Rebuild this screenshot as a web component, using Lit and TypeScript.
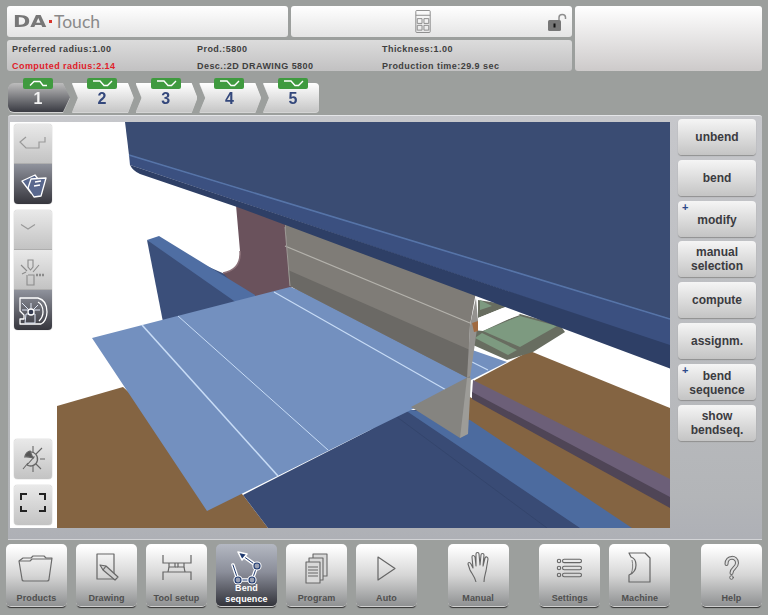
import { LitElement, html, css, svg } from "lit";
import { customElement } from "lit/decorators.js";

// bottom bar icons, drawn on the 61x39 upper part of each button
const folderIcon = svg`<g fill="none" stroke="#6b6b6b" stroke-width="1.2" stroke-linejoin="round">
  <path d="M13 17 L17 14 H25 L27 12 H38 L40 14 H46 L43 35 Q43 37 41 37 H18 Q16 37 16 35 Z" />
  <path d="M13 17 H24 L26 15 H46" />
</g>`;
const drawingIcon = svg`<g fill="none" stroke="#666" stroke-width="1.2" stroke-linejoin="round">
  <path d="M21 10 H38 V35 H21 Z" />
  <path d="M24 21 L30 22 L42 33 L39 36 L27 26 Z" fill="#cfcfcf" />
  <path d="M27 26 L30 22" />
</g>`;
const toolIcon = svg`<g fill="none" stroke="#666" stroke-width="1.2">
  <path d="M17 11 V19 H45 V11" />
  <path d="M23 19 V23 H29 V19 M32 19 V23 H38 V19" />
  <path d="M23 23 L22 28 M38 23 L39 28 M29 23 H32" />
  <path d="M17 36 V28 H45 V36" />
</g>`;
const bendNode = (x: number, y: number) => svg`
  <circle cx=${x} cy=${y} r="4.6" fill="#fff" />
  <circle cx=${x} cy=${y} r="3" fill="#9aa0b2" stroke="#1f3a70" stroke-width="1.2" />`;
const bendIcon = svg`<g fill="none" stroke-linejoin="round" stroke-linecap="round">
  <path d="M17 21 L22 36 H36 L41 22 L27 12" stroke="#fff" stroke-width="3.6" />
  <path d="M17 21 L22 36 H36 L41 22 L27 12" stroke="#1f3a70" stroke-width="1" />
  <path d="M22 8 L31 10 L26 16 Z" fill="#1f3a70" stroke="#fff" stroke-width="1.6" />
  ${bendNode(22, 36)}${bendNode(36, 36)}${bendNode(41, 22)}
</g>`;
const programIcon = svg`<g fill="#d8d8d8" stroke="#666" stroke-width="1.1" stroke-linejoin="round">
  <path d="M27 10 H41 V32 H27 Z" />
  <path d="M23 14 H37 V36 H23 Z" />
  <path d="M20 18 H34 V39 H20 Z" />
  <path d="M22 23 H32 M22 26 H32 M22 29 H32 M22 32 H32" fill="none" />
</g>`;
const autoIcon = svg`<path d="M22 13 L39 24.5 L22 36 Z" fill="none" stroke="#666" stroke-width="1.2" stroke-linejoin="round" />`;
const handIcon = svg`<path d="M28 38 C27 33 24 30 22 26 L20 20 C20 18 22 18 23 20 L25 24 L24 13 C24 11 26 11 27 13 L28 22 L28 10 C28 8 31 8 31 10 L32 21 L33 11 C33 9 36 9 36 11 L35 22 L37 14 C38 12 40 13 40 15 L38 27 C37 31 36 34 36 38" fill="none" stroke="#666" stroke-width="1.1" stroke-linejoin="round" />`;
const settingsIcon = svg`<g fill="none" stroke="#666" stroke-width="1.1">
  <circle cx="20" cy="17" r="1.7" /><circle cx="20" cy="24" r="1.7" /><circle cx="20" cy="31" r="1.7" />
  <rect x="23.5" y="15.2" width="19" height="3.4" rx="1.7" />
  <rect x="23.5" y="22.3" width="19" height="3.4" rx="1.7" />
  <rect x="23.5" y="29.3" width="19" height="3.4" rx="1.7" />
</g>`;
const machineIcon = svg`<g fill="none" stroke="#666" stroke-width="1.2" stroke-linejoin="round">
  <path d="M20 9 H36 L41 14 V38 H20 V31 C25 29 27 25 27 21 C27 17 25 14 22 13 Z" />
  <path d="M23 16 C24 20 24 26 22 30" stroke-width="0.8" />
</g>`;
const helpIcon = svg`<g fill="none" stroke-linecap="round">
  <path d="M25.5 20 C25.5 12 36 12 36 19 C36 24 30.5 24 30.5 29" stroke="#666" stroke-width="4" />
  <path d="M25.5 20 C25.5 12 36 12 36 19 C36 24 30.5 24 30.5 29" stroke="#ddd" stroke-width="2" />
  <circle cx="30.5" cy="33.5" r="1.8" fill="#ddd" stroke="#666" />
</g>`;

// left toolbar icons, 38x39
const contourIcon = svg`<path d="M12 13 L6 18 L12 24 H25 V18 H31 V13" fill="none" stroke="#999" stroke-width="1.2" />`;
const sheetsIcon = svg`<g fill="#59688e" stroke="#fff" stroke-width="1.3" stroke-linejoin="round">
  <path d="M8 17 L21 11 L24 15 L17 29 Z" />
  <path d="M17 15 L32 14 L27 32 L20 33 L14 24 Z" />
  <path d="M21 18 L27 17 M20 22 L26 21" fill="none" />
</g>`;
const chevronIcon = svg`<path d="M7 14.5 L14 19 L21 14.5" fill="none" stroke="#9a9a9a" stroke-width="1.2" />`;
const punchIcon = svg`<g fill="none" stroke="#8b8b8b" stroke-width="1.1">
  <path d="M14 10 H19 V17 L16.5 20 L14 17 Z" />
  <path d="M14 25 H20 V35 H13 V25 M7 15 L13 21 M25 15 L19 22 M8 24 L12 22" />
  <path d="M22 25 H31" stroke-width="2.5" stroke-dasharray="2 1" />
</g>`;
const dieIcon = svg`<g fill="none" stroke="#fff" stroke-width="1.3" stroke-linejoin="round">
  <path d="M6 8 H24 C32 10 33 17 33 22 C33 28 30 33 27 34 H6 V29 H10 V25 L6 21 V8 Z" />
  <path d="M24 12 C28 14 29 18 29 22 C29 26 27 29 25 31" />
  <path d="M17 13 V20 M8 13 L15 20 M24 15 L19 20 M12 24 H21 V33 H11 Z M8 20 H26" stroke="#dfe6f5" stroke-width="1" />
  <circle cx="17" cy="22" r="3" fill="#333a50" />
</g>`;
const focusIcon = svg`<g fill="none" stroke="#666" stroke-width="1.1">
  <path d="M16 13 A7 7 0 1 1 13 26" stroke-width="1.3" />
  <path d="M10 18 H20 L13 26 M19 7 V13 M28 9 L22 15 M31 20 H26 M27 30 L22 25 M19 33 V27 M9 30 L14 24" />
  <path d="M16 12 A7 7 0 0 0 11 17 L19 19 Z" fill="#555" />
</g>`;
const fitIcon = svg`<path d="M7 15 V9 H13 M25 9 H31 V15 M31 21 V26 H25 M13 26 H7 V21" fill="none" stroke="#222" stroke-width="2" />`;

const bottomGroups = [
  [
    { label: ["Products"], icon: folderIcon },
    { label: ["Drawing"], icon: drawingIcon },
    { label: ["Tool setup"], icon: toolIcon },
    { label: ["Bend", "sequence"], icon: bendIcon, active: true },
    { label: ["Program"], icon: programIcon },
    { label: ["Auto"], icon: autoIcon },
  ],
  [{ label: ["Manual"], icon: handIcon }],
  [
    { label: ["Settings"], icon: settingsIcon },
    { label: ["Machine"], icon: machineIcon },
  ],
  [{ label: ["Help"], icon: helpIcon }],
];

const sideButtons = [
  { lines: ["unbend"] },
  { lines: ["bend"] },
  { lines: ["modify"], plus: true },
  { lines: ["manual", "selection"] },
  { lines: ["compute"] },
  { lines: ["assignm."] },
  { lines: ["bend", "sequence"], plus: true },
  { lines: ["show", "bendseq."] },
];

const tabs = [
  { n: 1, up: true },
  { n: 2 },
  { n: 3 },
  { n: 4 },
  { n: 5 },
];

@customElement("app-root")
export class AppRoot extends LitElement {
  static styles = css`
    :host {
      display: block;
      width: 768px;
      height: 615px;
      overflow: hidden;
      background: #9c9f9d;
      font-family: "Liberation Sans", Arial, sans-serif;
    }

    .header {
      display: flex;
      gap: 3px;
      padding: 6px 6px 0 7px;
    }
    .header-left {
      width: 565px;
      display: flex;
      flex-direction: column;
      gap: 3.5px;
    }
    .header-top {
      display: flex;
      gap: 3px;
    }
    .cell {
      flex: none;
      width: 281px;
      height: 30.5px;
      box-sizing: border-box;
      display: flex;
      align-items: center;
      position: relative;
      border-radius: 3px;
      background: linear-gradient(#ffffff, #e4e4e4);
    }
    .logo {
      padding-left: 6px;
      color: #777777;
    }
    .logo-da {
      display: inline-block;
      font: 700 16px "DejaVu Sans", sans-serif;
      transform: scaleX(1.3);
      transform-origin: left;
      width: 35px;
    }
    .logo-dot {
      width: 3px;
      height: 3px;
      margin: 0 2px 0 1px;
      background: #d8352c;
    }
    .logo-touch {
      font: 400 17.5px Lato, sans-serif;
      color: #8a8a8a;
    }
    .center-icons {
      justify-content: center;
      padding-right: 18px;
    }
    .lock {
      position: absolute;
      right: 5px;
      top: 7px;
    }
    .info {
      height: 31px;
      border-radius: 3px;
      background: linear-gradient(#dcdcdc, #c2c1c2);
      display: grid;
      grid-template-columns: 185px 185px 1fr;
      grid-template-rows: 17px 17px;
      align-items: center;
      padding: 0 0 0 5px;
      font-size: 9px;
      font-weight: 700;
      letter-spacing: 0.45px;
      color: #3f3f3f;
    }
    .info .red {
      color: #e0202a;
    }
    .header-right {
      width: 187px;
      height: 65px;
      border-radius: 3px;
      background: linear-gradient(#ffffff, #cdcaca);
    }

    .tabs {
      display: flex;
      padding: 12px 0 0 8px;
      height: 29px;
      margin-bottom: 3px;
    }
    .tab {
      position: relative;
      width: 61.7px;
      margin-left: 2px;
      filter: drop-shadow(0 1px 0 #d4d4d4);
    }
    .tab:first-child {
      width: 62px;
      margin-left: 0;
    }
    .tab:last-child {
      width: 56px;
    }
    .shape {
      height: 29px;
      padding-left: 15px;
      background: linear-gradient(#ffffff, #c6c6c6);
      clip-path: polygon(0 0, 56px 0, 100% 50%, 56px 100%, 0 100%, 6px 50%);
    }
    .tab:first-child .shape {
      border-radius: 6px 0 0 6px;
      clip-path: polygon(0 0, 55px 0, 100% 50%, 55px 100%, 0 100%);
      background: linear-gradient(#bdbdbd, #393a42);
    }
    .tab:last-child .shape {
      border-radius: 0 4px 4px 0;
      clip-path: polygon(0 0, 100% 0, 100% 100%, 0 100%, 6px 50%);
    }
    .num {
      width: 30px;
      text-align: center;
      font-size: 16px;
      font-weight: 700;
      line-height: 32px;
      color: #34487c;
    }
    .tab:first-child .num {
      color: #f2f2f2;
    }
    .badge {
      position: absolute;
      top: -5px;
      left: 15px;
      width: 30px;
      height: 11px;
      border-radius: 2px;
      background: #3f9a3f;
    }
    .badge svg {
      display: block;
    }

    .panel {
      display: flex;
      margin: 0 6px 0 8px;
      height: 425px;
      padding: 6px 6px 12px 2px;
      box-sizing: border-box;
      border-radius: 3px 3px 0 0;
      border-top: 1px solid #e4e5e8;
      border-bottom: 1px solid #d2d3d6;
      background: linear-gradient(#c6c7cb, #b3b5b8 90%, #aeb0b6);
    }
    .canvas {
      display: flex;
      background: #ffffff;
      height: 406px;
      width: 660px;
    }
    .tools {
      width: 47px;
      flex: none;
      display: flex;
      flex-direction: column;
      gap: 6px;
      padding: 2px 0 3px 4px;
      box-sizing: border-box;
    }
    .tools .spacer {
      flex: 1;
    }
    .tool-group {
      width: 38px;
      border-radius: 4px;
      overflow: hidden;
      box-shadow: 0 0 1px #777;
    }
    .tool {
      height: 40px;
      background: linear-gradient(#e9e9e9, #c3c3c3);
      box-sizing: border-box;
      border-bottom: 1px solid #aeaeae;
    }
    .tool:last-child {
      border-bottom: none;
    }
    .tool.on {
      background: linear-gradient(#8f929c, #36363d);
    }
    .tool svg {
      display: block;
    }
    .scene {
      display: block;
      flex: none;
    }

    .side {
      margin-left: 8px;
      margin-top: -3px;
      display: flex;
      flex-direction: column;
      gap: 4.8px;
      width: 78px;
    }
    .side-btn {
      position: relative;
      height: 36px;
      border-radius: 4px;
      display: flex;
      flex-direction: column;
      align-items: center;
      justify-content: center;
      font-size: 12px;
      line-height: 14px;
      font-weight: 700;
      color: #3b3b40;
      background: linear-gradient(#f5f5f5, #c4c4c4);
      box-shadow: 0 1px 1px #8f8f8f;
    }
    .side-btn.plus {
      padding-top: 2px;
      box-sizing: border-box;
    }
    .plus-mark {
      position: absolute;
      top: 0;
      left: 4px;
      font-size: 11px;
      line-height: 13px;
      color: #2d4a8a;
    }

    .bottom {
      display: flex;
      justify-content: space-between;
      padding: 4px 6px 0;
    }
    .group {
      display: flex;
      gap: 9px;
    }
    .btn {
      width: 61px;
      height: 62px;
      border-radius: 5px;
      display: flex;
      flex-direction: column;
      background: linear-gradient(#ffffff 4%, #d6d6d6 50%, #8f9192);
      box-shadow: 0 1px 0 #d0d0d0, 0 3px 1px -1px #333;
      color: #4f4f4f;
    }
    .btn.active {
      background: linear-gradient(#b4b8c2, #8b8e9a 45%, #33343b);
      color: #ffffff;
    }
    .btn svg {
      display: block;
      flex: none;
      overflow: visible;
    }
    .label {
      flex: 1;
      display: flex;
      flex-direction: column;
      justify-content: flex-end;
      align-items: center;
      padding-bottom: 2px;
      font-size: 9px;
      line-height: 11px;
      font-weight: 700;
      letter-spacing: 0.1px;
    }
  `;

  renderBadge(up: boolean) {
    return html`<div class="badge">
      <svg width="30" height="11" viewBox="0 0 30 11">
        <path
          d=${up ? "M7 7.5 L11 3.5 H17 L20 7.5 H24" : "M6 3 H13 L17 7.5 L20.5 7.5 L25 3"}
          fill="none"
          stroke="#fff"
          stroke-width="1.4"
        />
      </svg>
    </div>`;
  }

  renderScene() {
    return html`<svg class="scene" width="613" height="406" viewBox="57 122 613 406">
      <!-- tables behind the sheet -->
      <polygon points="57,406 123,387 243,495 268,528 57,528" fill="#846442" />
      <polygon points="475,380 530,351 670,408 670,482 473,382" fill="#846442" />
      <polygon points="468,396 670,505 670,528 628,528 468,430" fill="#846442" />
      <polygon points="473,380 670,479 670,499 472,394" fill="#6c5f78" />
      <polygon points="472,392 670,497 670,508 472,399" fill="#4f4556" />

      <!-- green back gauge -->
      <polygon points="473,330 483,331 520,314 560,325 565,332 533,352 507,360 473,345" fill="#686d60" />
      <polygon points="483,331 520,316 557,326 520,347" fill="#7d9a80" />
      <polygon points="475,338 482,333 517,350 508,355" fill="#7d9a80" />
      <polygon points="478,300 510,305 478,318" fill="#686d60" />
      <polygon points="480,300 492,306 480,310" fill="#7d9a80" />
      <polygon points="478,318 503,308 520,315 478,330" fill="#ffffff" />

      <!-- die and lower blue parts -->
      <polygon points="147,240 163,322 240,302 250,285" fill="#3b4f7a" />
      <polygon points="243,495 370,430 400,410 420,410 590,528 268,528" fill="#394b75" />
      <polygon points="400,408 470,420 632,528 580,528 408,412" fill="#4c6b9f" />
      <line x1="397" y1="417" x2="547" y2="528" stroke="#34456c" stroke-width="1" />

      <!-- punch holder -->
      <path d="M236 205 L285 222 L292 292 L250 302 L223 273 C234 271 241 265 240 251 Z" fill="#6a525c" />
      <path d="M240 251 C241 265 234 271 223 273" fill="none" stroke="#8a7078" stroke-width="1.5" />
      <polygon points="147,240 159,236 255,295 255,299 237,303" fill="#4f6ea3" />

      <!-- sheet -->
      <polygon points="92,338 290,287 507,362 415,408 360,435 207,511" fill="#7390bf" />
      <line x1="142" y1="325" x2="278" y2="476" stroke="#c8dcf6" stroke-width="1.6" />
      <line x1="178" y1="316" x2="328" y2="450" stroke="#c8dcf6" stroke-width="1" />
      <line x1="274" y1="292" x2="448" y2="391" stroke="#c8dcf6" stroke-width="1.2" />
      <line x1="472" y1="362" x2="488" y2="370" stroke="#c8dcf6" stroke-width="1.2" />

      <!-- punch -->
      <polygon points="285,222 476,292 470,325 468,378 290,286" fill="#7f7c77" />
      <polygon points="288,270 470,350 468,378 290,286" fill="#6b6965" />
      <line x1="285" y1="246" x2="470" y2="323" stroke="#b4b2ac" stroke-width="1.2" />
      <line x1="285" y1="227" x2="290" y2="286" stroke="#9d9a96" stroke-width="1" />
      <polygon points="470,325 476,298 478,321 475,343 470,378 467,378" fill="#94928f" />
      <polygon points="472,323 478,321 478,331 474,332" fill="#a06a40" />
      <polygon points="470,376 411,407 460,438 467,434 470,380" fill="#858480" />
      <polygon points="467,378 471,378 468,434 460,438" fill="#9d9c98" />

      <!-- beam on top -->
      <polygon points="125,122 670,122 670,319 129,155" fill="#3a4c73" />
      <path d="M129 155 L670 319 V346 L130 165 Z" fill="#3b5080" />
      <path d="M130 165 L670 345 V368.5 L237 207 L140 174 Q133 171 130 165 Z" fill="#2e3f66" />
      <line x1="129" y1="155" x2="670" y2="319" stroke="#5674a8" stroke-width="1.6" />
    </svg>`;
  }

  render() {
    return html`
      <div class="header">
        <div class="header-left">
          <div class="header-top">
            <div class="cell logo">
              <span class="logo-da">DA</span><span class="logo-dot"></span><span class="logo-touch">Touch</span>
            </div>
            <div class="cell center-icons">
              <svg width="16" height="23" viewBox="0 0 16 24">
                <g fill="none" stroke="#8a8a8a" stroke-width="1">
                  <rect x="0.5" y="0.5" width="15" height="23" rx="1" />
                  <path d="M0.5 5.5 H15.5 M2 9 H7 V14 H2 Z M9 9 H14 V14 H9 Z M2 16 H7 V21 H2 Z M9 16 H14 V21 H9 Z" />
                </g>
              </svg>
              <svg class="lock" width="20" height="19" viewBox="0 0 20 19">
                <path d="M12 7 V4.5 C12 0.5 18.5 0.5 18.5 4.5 V6" fill="none" stroke="#8e8e8e" stroke-width="1.5" />
                <rect x="1" y="7" width="13" height="11" rx="1.5" fill="#777" />
                <rect x="6.5" y="10.5" width="2" height="4" fill="#111" />
              </svg>
            </div>
          </div>
          <div class="info">
            <span>Preferred radius:1.00</span>
            <span>Prod.:5800</span>
            <span>Thickness:1.00</span>
            <span class="red">Computed radius:2.14</span>
            <span>Desc.:2D DRAWING 5800</span>
            <span>Production time:29.9 sec</span>
          </div>
        </div>
        <div class="header-right"></div>
      </div>

      <div class="tabs">
        ${tabs.map(
          (t) => html`<div class="tab">
            <div class="shape"><div class="num">${t.n}</div></div>
            ${this.renderBadge(!!t.up)}
          </div>`
        )}
      </div>

      <div class="panel">
        <div class="canvas">
          <div class="tools">
            <div class="tool-group">
              <div class="tool"><svg width="38" height="39">${contourIcon}</svg></div>
              <div class="tool on"><svg width="38" height="39">${sheetsIcon}</svg></div>
            </div>
            <div class="tool-group">
              <div class="tool"><svg width="38" height="39">${chevronIcon}</svg></div>
              <div class="tool"><svg width="38" height="39">${punchIcon}</svg></div>
              <div class="tool on"><svg width="38" height="39">${dieIcon}</svg></div>
            </div>
            <div class="spacer"></div>
            <div class="tool-group"><div class="tool"><svg width="38" height="38">${focusIcon}</svg></div></div>
            <div class="tool-group"><div class="tool"><svg width="38" height="38">${fitIcon}</svg></div></div>
          </div>
          ${this.renderScene()}
        </div>
        <div class="side">
          ${sideButtons.map(
            (b) => html`<div class="side-btn ${b.plus ? "plus" : ""}">
              ${b.plus ? html`<span class="plus-mark">+</span>` : ""}
              ${b.lines.map((l) => html`<span>${l}</span>`)}
            </div>`
          )}
        </div>
      </div>

      <div class="bottom">
        ${bottomGroups.map(
          (group) => html`<div class="group">
            ${group.map(
              (b) => html`<div class="btn ${(b as { active?: boolean }).active ? "active" : ""}">
                <svg width="61" height="39" viewBox="0 0 61 39">${b.icon}</svg>
                <div class="label">${b.label.map((l) => html`<span>${l}</span>`)}</div>
              </div>`
            )}
          </div>`
        )}
      </div>
    `;
  }
}
